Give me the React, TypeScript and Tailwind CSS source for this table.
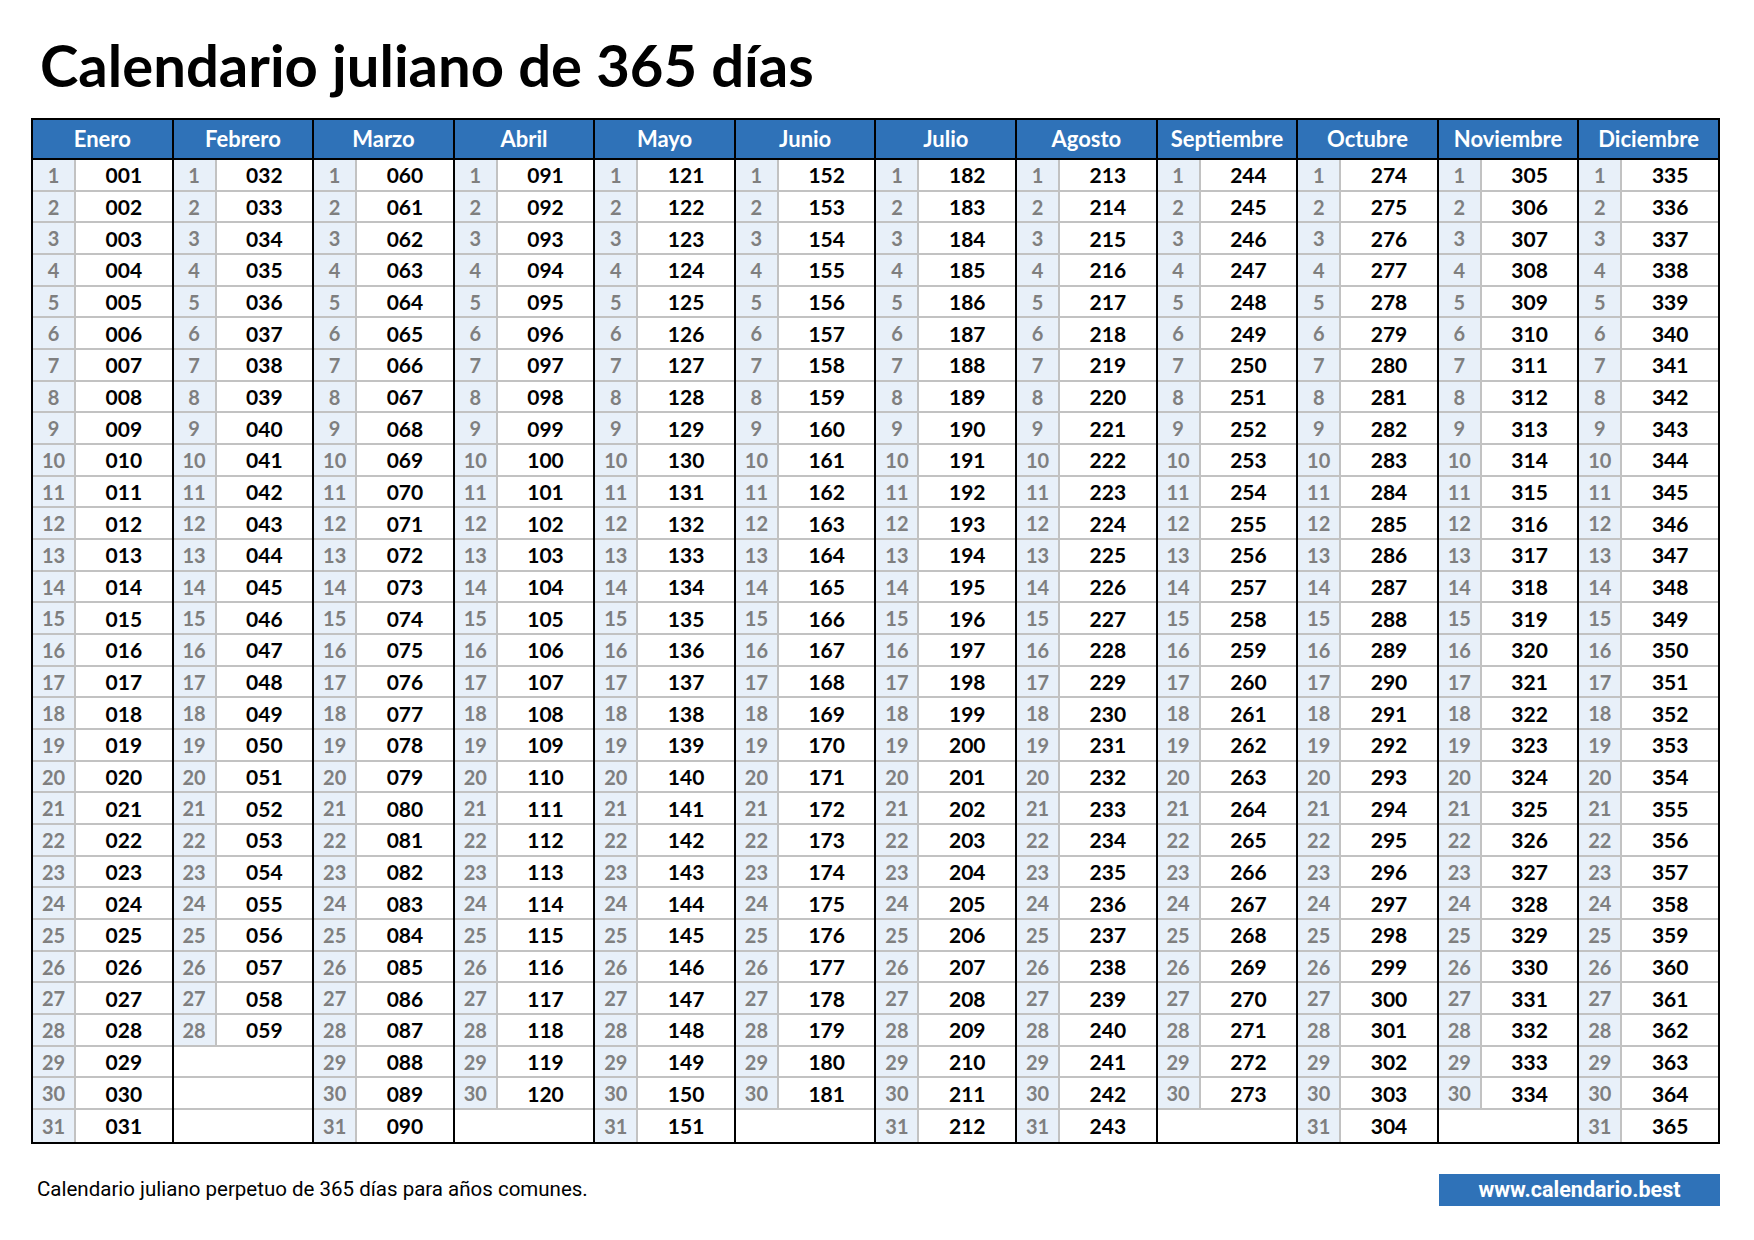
import React from "react"

const MONTHS = [
  { name: "Enero", days: 31 },
  { name: "Febrero", days: 28 },
  { name: "Marzo", days: 31 },
  { name: "Abril", days: 30 },
  { name: "Mayo", days: 31 },
  { name: "Junio", days: 30 },
  { name: "Julio", days: 31 },
  { name: "Agosto", days: 31 },
  { name: "Septiembre", days: 30 },
  { name: "Octubre", days: 31 },
  { name: "Noviembre", days: 30 },
  { name: "Diciembre", days: 31 },
]

const pad = (n: number) => String(n).padStart(3, "0")

function MonthColumn({
  name,
  days,
  offset,
  first,
}: {
  name: string
  days: number
  offset: number
  first: boolean
}) {
  const rows = Array.from({ length: 31 }, (_, i) => i + 1)
  return (
    <div className={`flex flex-1 flex-col ${first ? "" : "border-l-2 border-black"}`}>
      <div className="flex h-[40px] items-center justify-center border-b-2 border-black bg-[#2f72b8] text-[22px] font-bold text-white">
        {name}
      </div>
      {rows.map((d) => (
        <div
          key={d}
          className={`flex h-[31.68px] ${d === 31 ? "" : "border-b-2 border-[#c2c2c2]"}`}
        >
          {d <= days ? (
            <>
              <div className="flex w-[43px] items-center justify-center border-r-2 border-[#c2c2c2] bg-[#e8f0f9] font-bold text-[#7f7f7f]">
                {d}
              </div>
              <div className="flex flex-1 items-center justify-center text-[21px] font-bold text-black">
                {pad(offset + d)}
              </div>
            </>
          ) : (
            <div className="flex-1 bg-white" />
          )}
        </div>
      ))}
    </div>
  )
}

export default function App() {
  let acc = 0
  const offsets = MONTHS.map((m) => {
    const o = acc
    acc += m.days
    return o
  })

  return (
    <div className="h-[1240px] w-[1754px] bg-white font-['Lato',sans-serif]">
      <div className="flex flex-col pl-[31px] pr-[34px] pt-[36px]">
        <h1 className="ml-[9px] h-[58px] text-[58px] font-bold leading-none text-black">
          Calendario juliano de 365 días
        </h1>
        <div className="mt-[24px] flex border-2 border-black text-[20px] leading-none">
          {MONTHS.map((m, i) => (
            <MonthColumn
              key={m.name}
              name={m.name}
              days={m.days}
              offset={offsets[i]}
              first={i === 0}
            />
          ))}
        </div>
        <div className="mt-[30px] flex h-[32px] items-center justify-between">
          <p className="ml-[6px] font-['Roboto',sans-serif] text-[20.5px] text-black">
            Calendario juliano perpetuo de 365 días para años comunes.
          </p>
          <div className="flex h-[32px] w-[281px] items-center justify-center bg-[#2f72b8] font-['Roboto',sans-serif] text-[21.5px] font-bold text-white">
            www.calendario.best
          </div>
        </div>
      </div>
    </div>
  )
}
